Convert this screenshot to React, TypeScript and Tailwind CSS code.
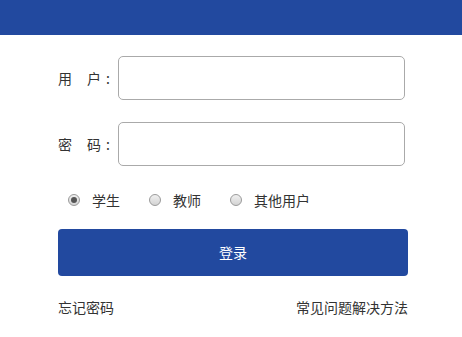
import { useState } from 'react';

const roles = ['学生', '教师', '其他用户'];

function Radio({ checked }: { checked: boolean }) {
  return (
    <span className="flex h-[12px] w-[12px] items-center justify-center rounded-full border border-[#9a9a9a] bg-gradient-to-b from-[#f0f0f0] to-[#d4d4d4]">
      {checked && <span className="h-[6px] w-[6px] rounded-full bg-[#555]" />}
    </span>
  );
}

export default function App() {
  const [role, setRole] = useState('学生');

  return (
    <div className="min-h-[337px] w-[462px] bg-white text-[14px] text-[#333] font-['Noto_Sans_CJK_SC','Microsoft_YaHei',sans-serif]">
      <div className="h-[35px] bg-[#22499f]" />

      <div className="pl-[58px] pt-[21px]">
        <div className="flex items-center">
          <span className="flex w-[60px] items-center">
            <span>用</span>
            <span className="ml-[15px]">户</span>
            <span className="ml-[5px]">:</span>
          </span>
          <input className="h-[44px] w-[287px] rounded-[5px] border border-[#aaa] bg-white px-2 outline-none" />
        </div>

        <div className="mt-[22px] flex items-center">
          <span className="flex w-[60px] items-center">
            <span>密</span>
            <span className="ml-[15px]">码</span>
            <span className="ml-[5px]">:</span>
          </span>
          <input type="password" className="h-[44px] w-[287px] rounded-[5px] border border-[#aaa] bg-white px-2 outline-none" />
        </div>

        <div className="mt-[22px] flex h-[24px] items-center pl-[10px]">
          {roles.map(r => (
            <label key={r} className="mr-[29px] flex cursor-pointer items-center" onClick={() => setRole(r)}>
              <Radio checked={role === r} />
              <span className="ml-[12px]">{r}</span>
            </label>
          ))}
        </div>

        <button className="mt-[17px] flex h-[47px] w-[350px] items-center justify-center rounded-[4px] bg-[#22499f] text-[14px] text-white">
          登录
        </button>

        <div className="mt-[21px] flex w-[350px] justify-between">
          <a>忘记密码</a>
          <a>常见问题解决方法</a>
        </div>
      </div>
    </div>
  );
}
